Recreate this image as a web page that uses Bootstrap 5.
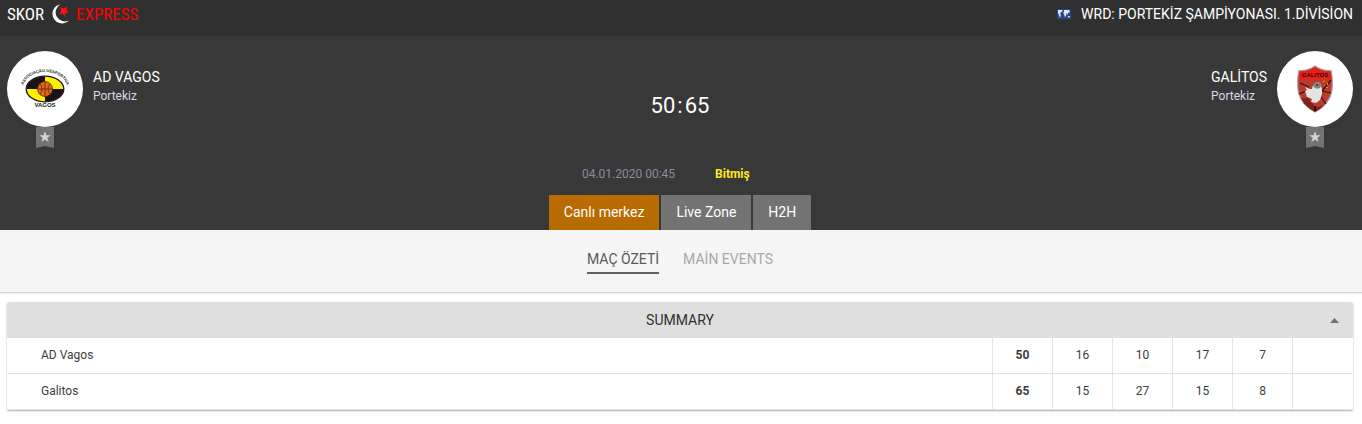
<!DOCTYPE html>
<html lang="tr">
<head>
<meta charset="utf-8">
<meta name="viewport" content="width=device-width, initial-scale=1">
<title>AD Vagos - Galitos | Skor Express</title>
<link href="https://cdn.jsdelivr.net/npm/bootstrap@5.3.0/dist/css/bootstrap.min.css" rel="stylesheet">
<style>
body{font-family:Roboto,"Liberation Sans",sans-serif;font-size:14px;line-height:20px;color:#3d3d3d;background:#fff}
.gutter{padding-left:7px;padding-right:9px}
.topbar{background:#303030;height:36px;padding-bottom:8px;color:#fff}
.brand{font-family:"Roboto Condensed","Liberation Sans Narrow",Roboto,sans-serif;font-size:17px;font-weight:400;line-height:24px;gap:6px;color:#fff}
.brand .red{color:#ff0000}
.league{font-weight:400;gap:10px}
.hero{background:#383838;color:#fff;padding-top:15px}
.sides{display:grid;grid-template-columns:1fr auto 1fr;min-height:108px}
.team{gap:10px}
.crest{width:76px;height:76px;background:#fff}
.team-name{font-weight:400;line-height:20px;padding-top:16px}
.team-land{font-size:12px;line-height:18px;color:#d8d8e8}
.fav{width:18px;height:21px;line-height:0}
.score{font-size:22px;line-height:28px;padding-top:41px}
.score .colon{padding:0 2px}
.meta{font-size:12px;line-height:16px;gap:40px;padding-top:7px;padding-bottom:13px}
.meta time{color:#8c8c9c}
.state{color:#ffe81a;font-weight:700;min-width:63px}
.maintabs{gap:2px}
.maintabs .btn{--bs-btn-border-radius:0;border:0;background:#737373;color:#fff;font-size:14px;font-weight:400;line-height:20px;padding:7px 15px 8px}
.maintabs .btn.active{background:#b86b00;color:#fff}
.subbar{background:#f5f5f5;border-bottom:1px solid #d3d3d3;box-shadow:0 1px 1px #0001;padding-top:19px;padding-bottom:18px;gap:24px}
.subbar button{border:0;border-bottom:2px solid transparent;background:none;padding:0 0 3px;color:#a8a8a8}
.subbar button.active{color:#5a5a5a;border-color:#606060}
.panel{margin:9px 9px 14px 7px;border-radius:2px;box-shadow:0 1px 2px #0005;overflow:hidden}
.panel-head{background:#dfdfdf;border:0;height:36px;color:#303030;padding:0 14px 0 23px}
.scores{font-size:12px;line-height:18px;table-layout:fixed;border-collapse:separate;border-spacing:0;--bs-table-color:#3d3d3d}
.scores th,.scores td{height:36px;padding:8px 0 9px;border-bottom:1px solid #e5e5e5;font-weight:400;text-align:center}
.scores td{border-left:1px solid #e5e5e5}
.scores th{text-align:left;padding-left:34px}
.scores .total{font-weight:700}
.c-pt{width:60px}.c-end{width:61px}
</style>
</head>
<body>
<header class="topbar gutter d-flex justify-content-between align-items-center">
  <a href="#" class="brand d-flex align-items-center text-decoration-none">SKOR
    <svg width="20" height="20" viewBox="0 0 20 20" aria-hidden="true"><path d="M10.500 .3A9.600 9.600 0 1 0 19 16.400A8.300 8.300 0 0 1 10.500.300Z" fill="#fff"/><path d="M10 3l3.500 1.500L17 2.500l-.5 3.500 2.500 2.300-3.400.7L14.500 12.500l-1.800-3L9 9.800l2.300-3z" fill="#ff1010"/></svg>
    <span class="red">EXPRESS</span></a>
  <div class="league d-flex align-items-center">
    <svg width="14" height="10" viewBox="0 0 14 10" aria-hidden="true"><path fill="#24468c" d="M0 0h14v10H0z"/><path fill="#dfe9ee" d="M1 1h4l1 1-2 1-1 2 1 1-1 3-1-3-1-2zM7 1h5l1 2-2 1v2L9.500 4 9 7 8 8 7 5 6 4l1-1zM11 7l2 0-1 2-1-1z"/></svg>
    <span>WRD: PORTEKİZ ŞAMPİYONASI. 1.DİVİSİON</span>
  </div>
</header>

<section class="hero">
  <div class="sides gutter">
    <div class="team d-flex align-items-start">
      <div class="d-flex flex-column align-items-center">
        <div class="crest rounded-circle d-flex align-items-center justify-content-center">
          <svg width="50" height="42" viewBox="0 0 50 42" role="img" aria-label="AD Vagos">
            <defs><clipPath id="oval"><ellipse cx="25" cy="21" rx="18.500" ry="12.500"/></clipPath><path id="arc1" d="M3 19C6 -1 44 -1 47 19"/></defs>
            <g clip-path="url(#oval)"><path fill="#1b1218" d="M6 8h19v13H6zM25 21h20v14H25z"/><path fill="#fff000" d="M25 8h20v13H25zM6 21h19v13H6z"/></g>
            <ellipse cx="25" cy="21" rx="18.800" ry="12.800" fill="none" stroke="#1b1218" stroke-width="1.300"/>
            <circle cx="25" cy="21" r="7.500" fill="#e66a1c" stroke="#4a2010" stroke-width=".7"/>
            <path d="M25 13.500v15M17.500 21h15M20 15.500q4 5.500 0 11M30 15.500q-4 5.500 0 11" fill="none" stroke="#5a2510" stroke-width=".8"/>
            <g font-family="Liberation Sans,sans-serif" font-weight="700" fill="#1b1b1b" text-anchor="middle"><text font-size="4"><textPath href="#arc1" startOffset="50%">ASSOCIAÇÃO DESPORTIVA</textPath></text><text x="25" y="39" font-size="6">VAGOS</text></g>
          </svg>
        </div>
        <button type="button" class="fav border-0 p-0 bg-transparent" aria-label="AD Vagos favorilere ekle"><svg width="18" height="21" viewBox="0 0 18 21"><path fill="#737373" d="M0 0h18v21l-9-2-9 2z"/><path fill="#d5d5d5" d="M9 4l1.400 4.200h4.400l-3.500 2.600 1.300 4.200L9 12.400 5.400 15l1.300-4.200-3.500-2.600h4.400z"/></svg></button>
      </div>
      <div><div class="team-name">AD VAGOS</div><div class="team-land">Portekiz</div></div>
    </div>
    <div class="score">50<span class="colon">:</span>65</div>
    <div class="team d-flex align-items-start justify-content-end">
      <div><div class="team-name">GALİTOS</div><div class="team-land">Portekiz</div></div>
      <div class="d-flex flex-column align-items-center">
        <div class="crest rounded-circle d-flex align-items-center justify-content-center">
          <svg width="38" height="48" viewBox="0 0 38 48" role="img" aria-label="Galitos">
            <path d="M19 1Q26 6 35 5.500Q37 13 36 25Q34 39 19 47Q4 39 2 25Q1 13 3 5.500Q12 6 19 1Z" fill="#ba3a2b" stroke="#a8a0a0" stroke-width="1.200"/>
            <path d="M19 2Q26 7 34 6.500L35 14H3L4 6.500Q12 7 19 2Z" fill="#ee1c18"/>
            <path d="M4 18l9 4M3 29l7-3M8 39l5-7M35 28l-9-2 9-11M30 39l-5-7" fill="none" stroke="#321512" stroke-width="1.200"/>
            <path d="M19 47Q9 42 5 33l8 1 5 7 5 1 6-3Q25 44 19 47Z" fill="#872019"/>
            <text x="19" y="11.500" font-family="Liberation Sans,sans-serif" font-size="6" font-weight="700" text-anchor="middle" fill="#280a0a">GALITOS</text>
            <path d="M17 20l6-3 3 7 0 5-2 6-4 3-5-1 1-3-5-2-2-6 2-1-2-3 5 2 2 0z" fill="#e4e4e2"/>
            <path d="M17 21q0-4 5-4t2 6q-5 2-7-2z" fill="#858585"/><path d="M20 19l3 1-2 1z" fill="#241818"/>
            <path d="M28 20h1v1h-1zM31 18h1v2h-1zM30 22h2v1h-2zM27 16h2v1h-2z" fill="#e38a27"/><path d="M19 41v5" stroke="#1e1212" stroke-width="2"/>
          </svg>
        </div>
        <button type="button" class="fav border-0 p-0 bg-transparent" aria-label="Galitos favorilere ekle"><svg width="18" height="21" viewBox="0 0 18 21"><path fill="#737373" d="M0 0h18v21l-9-2-9 2z"/><path fill="#d5d5d5" d="M9 4l1.400 4.200h4.400l-3.500 2.600 1.300 4.200L9 12.400 5.400 15l1.300-4.200-3.500-2.600h4.400z"/></svg></button>
      </div>
    </div>
  </div>
  <div class="meta gutter d-flex justify-content-center"><time datetime="2020-01-04T00:45">04.01.2020 00:45</time><span class="state">Bitmiş</span></div>
  <nav class="maintabs gutter d-flex justify-content-center">
    <button type="button" class="btn active">Canlı merkez</button>
    <button type="button" class="btn">Live Zone</button>
    <button type="button" class="btn">H2H</button>
  </nav>
</section>

<nav class="subbar gutter d-flex justify-content-center">
  <button type="button" class="active">MAÇ ÖZETİ</button>
  <button type="button">MAİN EVENTS</button>
</nav>

<main class="panel">
  <button type="button" class="panel-head w-100 d-flex align-items-center" data-bs-toggle="collapse" data-bs-target="#summary" aria-expanded="true" aria-controls="summary">
    <span class="flex-fill text-center">SUMMARY</span>
    <svg width="9" height="5" viewBox="0 0 9 5" aria-hidden="true"><path fill="#707070" d="M4.500 0L9 5H0z"/></svg>
  </button>
  <div id="summary" class="collapse show">
    <table class="scores table mb-0">
      <colgroup><col><col class="c-pt"><col class="c-pt"><col class="c-pt"><col class="c-pt"><col class="c-pt"><col class="c-end"></colgroup>
      <tbody>
        <tr><th scope="row">AD Vagos</th><td class="total">50</td><td>16</td><td>10</td><td>17</td><td>7</td><td></td></tr>
        <tr><th scope="row">Galitos</th><td class="total">65</td><td>15</td><td>27</td><td>15</td><td>8</td><td></td></tr>
      </tbody>
    </table>
  </div>
</main>
<script src="https://cdn.jsdelivr.net/npm/bootstrap@5.3.0/dist/js/bootstrap.bundle.min.js"></script>
</body>
</html>
